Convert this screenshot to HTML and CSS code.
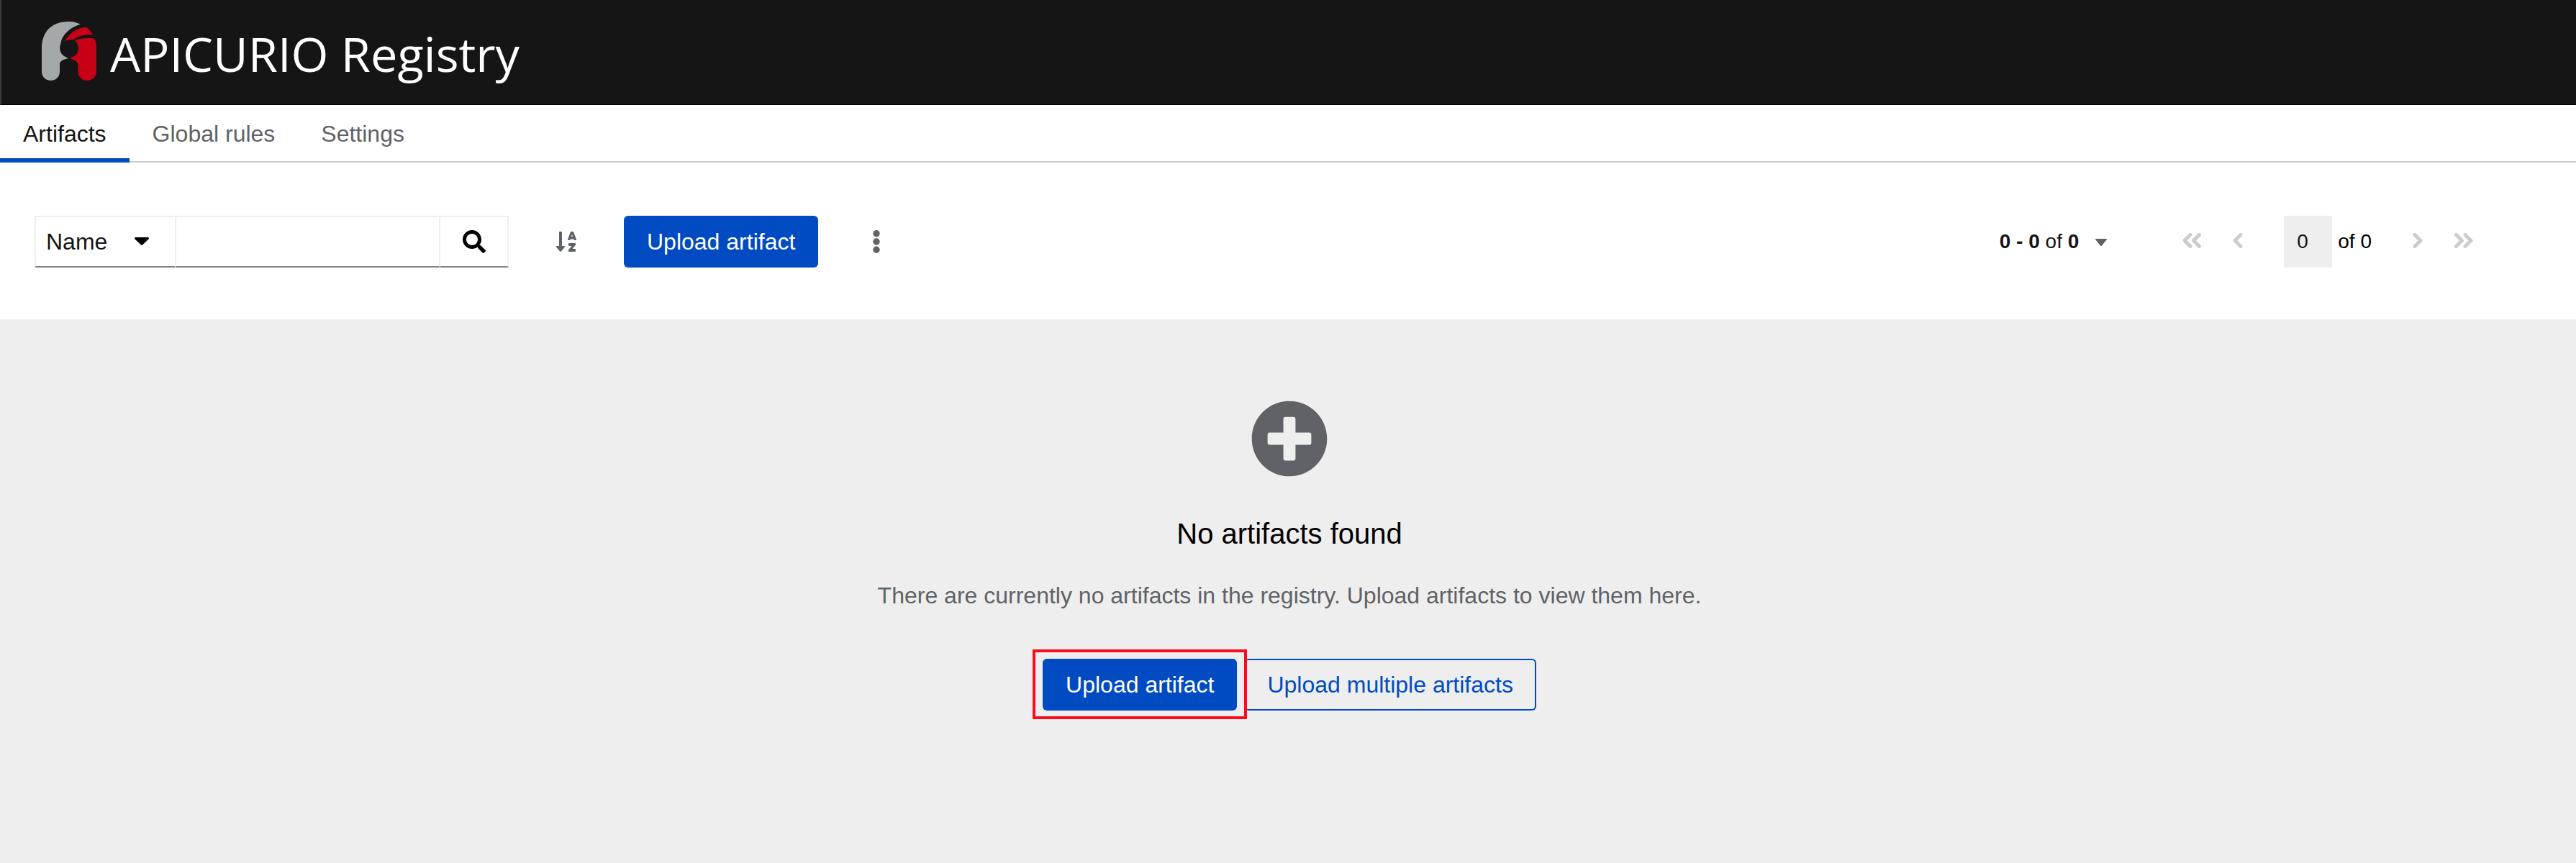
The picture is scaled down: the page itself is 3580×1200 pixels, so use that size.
FILE: index.html
```html
<!DOCTYPE html>
<html lang="en">
<head>
<meta charset="utf-8">
<title>Apicurio Registry</title>
<link rel="stylesheet" href="styles.css">
</head>
<body>
<header class="masthead">
  <svg class="logo" viewBox="0 0 760 145" role="img" aria-label="Apicurio Registry">
    <path class="logo-grey" d="M58 67C58 45 71 30 95 30C102 30 108 31.500 111.500 34C97 38 86 49 84.500 60C83 65 83 67 83.500 70C85 76 89 78.500 95 81C87 83 83.500 85 83 89V99.500C83 107 77.500 112 70.500 112S58 107 58 99.500Z"/>
    <path class="logo-red" d="M89.500 58C95 47 107 38.500 120 37.500C124.500 41 127.500 45 129 48.500C119 47.500 109 50 101.500 55.500C97 54.500 93 55.500 89.500 58Z"/>
    <path class="logo-red" d="M104 57C110 53 120 52.500 131 53.500C133 57 134 61 134 67V99.500C134 107 128 112 121 112S108.500 107 108.500 99.500V91C108.500 86 104 83.500 97 81C104 78.500 109 75 109 67C109 62.500 107 59 104 57Z"/>
    <text class="logo-text" x="153" y="99.500" textLength="569" lengthAdjust="spacingAndGlyphs">APICURIO Registry</text>
  </svg>
</header>
<nav class="tabs">
  <a class="tab tab-current">Artifacts</a>
  <a class="tab">Global rules</a>
  <a class="tab">Settings</a>
</nav>
<section class="toolbar">
  <div class="search">
    <button class="search-type">Name
      <svg class="caret" viewBox="0 0 20 11"><path d="M1.500 0h17c1.300 0 2 1.500 1 2.500L11 10.500q-1 1-2 0L.5 2.500C-.5 1.500.2 0 1.500 0z"/></svg>
    </button>
    <input class="search-input" aria-label="Filter">
    <button class="search-go" aria-label="Search"><svg class="icon" viewBox="0 0 512 512"><path d="M505 442.700L405.300 343c-4.500-4.500-10.600-7-17-7H372c27.600-35.300 44-79.700 44-128C416 93.100 322.900 0 208 0S0 93.100 0 208s93.100 208 208 208c48.300 0 92.700-16.400 128-44v16.300c0 6.400 2.500 12.500 7 17l99.700 99.700c9.400 9.400 24.600 9.400 33.900 0l28.300-28.300c9.400-9.400 9.400-24.600.1-34zM208 336c-70.700 0-128-57.200-128-128 0-70.700 57.200-128 128-128 70.700 0 128 57.200 128 128 0 70.700-57.200 128-128 128z"/></svg></button>
  </div>
  <svg class="sort" viewBox="0 0 448 512"><path d="M176 352h-48V48a16 16 0 0 0-16-16H80a16 16 0 0 0-16 16v304H16c-14.190 0-21.360 17.240-11.290 27.310l80 96a16 16 0 0 0 22.620 0l80-96C197.350 369.260 190.220 352 176 352zm240-64H288a16 16 0 0 0-16 16v32a16 16 0 0 0 16 16h56l-61.260 70.450A32 32 0 0 0 272 446.370V464a16 16 0 0 0 16 16h128a16 16 0 0 0 16-16v-32a16 16 0 0 0-16-16h-56l61.260-70.450A32 32 0 0 0 432 321.630V304a16 16 0 0 0-16-16zm31.060-85.380l-59.270-160A16 16 0 0 0 372.720 32h-41.440a16 16 0 0 0-15.070 10.620l-59.270 160A16 16 0 0 0 272 224h24.830a16 16 0 0 0 15.230-11.080l4.420-12.920h71l4.410 12.920A16 16 0 0 0 407.160 224H432a16 16 0 0 0 15.060-21.380zM335.610 144L352 96l16.390 48z"/></svg>
  <button class="btn btn-primary">Upload artifact</button>
  <svg class="kebab" viewBox="0 0 10 32"><circle cx="5" cy="4.700" r="4.700"/><circle cx="5" cy="16" r="4.700"/><circle cx="5" cy="27.300" r="4.700"/></svg>
  <div class="pagination">
    <span class="range"><b>0 - 0</b> of <b>0</b></span>
    <svg class="page-caret" viewBox="0 0 16 10"><path d="M.5 0h15q1 .8 0 1.600L9 9.400q-1 1-2 0L.5 1.600q-1-.8 0-1.600z"/></svg>
    <svg class="angle angle-double first" viewBox="0 0 26 21"><path d="M11 2.500L3 10.500l8 8M23.500 2.500l-8 8 8 8"/></svg>
    <svg class="angle prev" viewBox="0 0 14 21"><path d="M11 2.500L3 10.500l8 8"/></svg>
    <input class="page-input" value="0" aria-label="Page">
    <span class="page-total">of 0</span>
    <svg class="angle next" viewBox="0 0 14 21"><path d="M3 2.500l8 8-8 8"/></svg>
    <svg class="angle angle-double last" viewBox="0 0 26 21"><path d="M2.500 2.500l8 8-8 8M15 2.500l8 8-8 8"/></svg>
  </div>
</section>
<main class="empty">
  <svg class="empty-icon" viewBox="0 0 512 512"><path d="M256 8C119 8 8 119 8 256s111 248 248 248 248-111 248-248S393 8 256 8zm144 276c0 6.600-5.400 12-12 12h-92v92c0 6.600-5.400 12-12 12h-56c-6.600 0-12-5.400-12-12v-92h-92c-6.600 0-12-5.400-12-12v-56c0-6.600 5.400-12 12-12h92v-92c0-6.600 5.400-12 12-12h56c6.600 0 12 5.400 12 12v92h92c6.600 0 12 5.400 12 12v56z"/></svg>
  <h1 class="empty-title">No artifacts found</h1>
  <p class="empty-body">There are currently no artifacts in the registry. Upload artifacts to view them here.</p>
  <div class="empty-actions">
    <div class="callout"><button class="btn btn-primary">Upload artifact</button></div>
    <button class="btn btn-secondary">Upload multiple artifacts</button>
  </div>
</main>
</body>
</html>
```
FILE: styles.css
```css
* { box-sizing: border-box; }
body {
  margin: 0;
  height: 1200px;
  display: flex;
  flex-direction: column;
  background: #fff;
  color: #151515;
  font: 32px/48px "Liberation Sans", Arial, sans-serif;
}
svg { display: block; flex: none; }
button, input { margin: 0; border: 0; border-radius: 0; background: none; font: inherit; color: inherit; }

.masthead { flex: none; height: 146px; background: #151515; border-bottom: 1px solid #000; border-left: 2px solid #3c3c3c; }
.logo { width: 760px; height: 145px; margin-left: -2px; }
.logo-grey { fill: #a3a8a8; }
.logo-red { fill: #c70016; }
.logo-text { fill: #fff; font: 400 66px "Open Sans", "Noto Sans", sans-serif; }

.tabs { flex: none; display: flex; height: 80px; border-bottom: 2px solid #ccc; }
.tab { height: 80px; padding: 16px 32px; color: #5f6267; }
.tab-current { color: #151515; border-bottom: 6px solid #004bc1; }

.toolbar { flex: none; display: flex; align-items: center; height: 218px; padding: 1px 143px 0 48px; }
.search { display: flex; width: 659px; height: 72px; }
.search > * { height: 72px; border: 2px solid #eee; border-bottom: 2px solid #7d8282; }
.search .search-type { width: 195px; padding: 0 16px 0 14px; border-right: 0; display: flex; align-items: center; justify-content: space-between; }
.caret { width: 20px; height: 11px; margin-right: 20px; }
.search-input { flex: 1; min-width: 0; }
.search .search-go { width: 95px; padding: 0; border-left: 0; display: flex; align-items: center; justify-content: center; }
.icon { width: 32px; height: 32px; }
.sort { width: 28px; height: 32px; margin: 0 66px; fill: #5f6267; }
.kebab { width: 10px; height: 32px; margin-left: 75.600px; fill: #5f6267; }

.btn { flex: none; height: 72px; padding: 0 32px; border-radius: 6px; white-space: nowrap; }
.btn-primary { background: #004bc1; color: #fff; }
.btn-secondary { color: #004bc1; box-shadow: inset 0 0 0 2px #004bc1; }

.pagination { margin-left: auto; display: flex; align-items: center; font-size: 28px; white-space: nowrap; }
.page-caret { width: 16px; height: 10px; margin: 2px 0 0 23px; fill: #5f6267; }
.angle { width: 14px; height: 21px; margin-top: -2px; fill: none; stroke: #ccc; stroke-width: 5; stroke-linecap: round; stroke-linejoin: round; }
.angle-double { width: 26px; }
.first { margin-left: 105px; }
.prev { margin-left: 44px; }
.page-input { width: 67px; height: 72px; margin-left: 57px; padding: 0 18px; background: #eee; }
.page-total { margin-left: 8px; color: #000; }
.next { margin-left: 57px; }
.last { margin-left: 44px; }

.empty { flex: 1; display: flex; flex-direction: column; align-items: center; padding: 112px 0 0 4px; background: #eee; }
.empty-icon { width: 108px; height: 108px; fill: #5f6267; }
.empty-title { margin: 52px 0 36px; color: #000; font-size: 40px; font-weight: 400; line-height: 52px; }
.empty-body { margin: 0; color: #5f6267; }
.empty-actions { display: flex; gap: 10px; margin-top: 64px; }
.callout { position: relative; }
/* Highlight frame drawn over the neighbouring button's edge */
.callout::after { content: ""; position: absolute; z-index: 1; inset: -13px -14px -12px; border: 4px solid #ff0a1a; pointer-events: none; }
```
